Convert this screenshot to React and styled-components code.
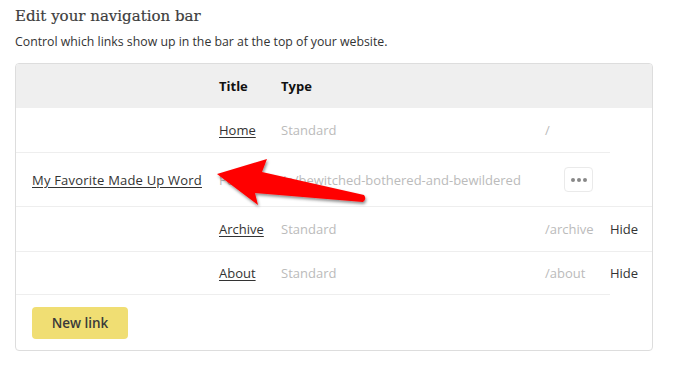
import React from 'react';
import styled, { createGlobalStyle } from 'styled-components';

const GlobalStyle = createGlobalStyle`
  body {
    margin: 0;
    background: #fff;
    font-family: "Open Sans", "Noto Sans", sans-serif;
    color: #333;
  }
`

const Page = styled.div`
  position: relative;
  width: 688px;
  height: 373px;
  padding: 0 15px;
  box-sizing: border-box;
  overflow: hidden;
`

const Heading = styled.h2`
  margin: 0;
  padding-top: 6px;
  font-family: "DejaVu Serif", "Liberation Serif", serif;
  font-weight: normal;
  font-size: 15px;
  line-height: 20px;
  color: #3d3d3d;
  -webkit-text-stroke: 0.2px #3d3d3d;
`

const Subtitle = styled.p`
  margin: 8px 0 0;
  font-size: 12.3px;
  line-height: 16px;
  color: #333;
`

const Card = styled.div`
  width: 638px;
  box-sizing: border-box;
  margin-top: 13px;
  border: 1px solid #ddd;
  border-radius: 4px;
  overflow: hidden;
`

const Row = styled.div`
  display: grid;
  grid-template-columns: 203px 62px 264px 65px 42px;
  background: ${p => (p.$head ? '#efefef' : '#fff')};
`

const Cell = styled.div`
  display: flex;
  align-items: center;
  height: ${p => p.$h || 44}px;
  padding-left: ${p => p.$pad || 0}px;
  border-bottom: 1px solid ${p => (p.$bare ? 'transparent' : '#eee')};
  font-size: 13px;
  white-space: nowrap;
  color: ${p => (p.$muted ? '#bbb' : '#333')};
  font-weight: ${p => (p.$bold ? 700 : 400)};
  ${p => p.$bold && 'color: #111;'}
  ${p => p.$head && 'border-bottom: none;'}
`

const NavLink = styled.a`
  color: #333;
  text-decoration: underline;
  text-underline-offset: 2px;
  letter-spacing: ${p => p.$wide ? '0.2px' : '0'};
`

const DotsButton = styled.button`
  display: flex;
  align-items: center;
  justify-content: center;
  gap: 2px;
  margin-left: 19px;
  width: 29px;
  height: 25px;
  padding: 0;
  border: 1px solid #eaeaea;
  border-radius: 4px;
  background: #fff;
`

const Dot = styled.span`
  width: 4px;
  height: 4px;
  border-radius: 50%;
  background: #888;
`

const Footer = styled.div`
  padding: 12px 16px 11px;
`

const NewLink = styled.button`
  width: 96px;
  height: 32px;
  border: none;
  border-radius: 4px;
  background: #f0de73;
  color: #3a3a3a;
  font-family: "Open Sans", "Noto Sans", sans-serif;
  font-size: 13.5px;
  font-weight: 600;
`

const Arrow = styled.svg`
  position: absolute;
  left: 0;
  top: 0;
  pointer-events: none;
`

const links = [
  { title: 'Home', path: '/' },
  { title: 'Archive', path: '/archive', hide: true },
  { title: 'About', path: '/about', hide: true, last: true },
]

function LinkRow({ link }) {
  const h = link.last ? 42 : 44
  return (
    <Row>
      <Cell $h={h} />
      <Cell $h={h}><NavLink>{link.title}</NavLink></Cell>
      <Cell $h={h} $muted>Standard</Cell>
      <Cell $h={h} $muted>{link.path}</Cell>
      {link.hide && <Cell $h={h} $bare={link.last}>Hide</Cell>}
    </Row>
  )
}

export default function App() {
  return (
    <Page>
      <GlobalStyle />
      <Heading>Edit your navigation bar</Heading>
      <Subtitle>Control which links show up in the bar at the top of your website.</Subtitle>
      <Card>
        <Row $head>
          <Cell $head />
          <Cell $head $bold>Title</Cell>
          <Cell $head $bold>Type</Cell>
          <Cell $head />
          <Cell $head />
        </Row>
        <LinkRow link={links[0]} />
        <Row>
          <Cell $h={53} $pad={16}><NavLink $wide>My Favorite Made Up Word</NavLink></Cell>
          <Cell $h={53} $muted>Post</Cell>
          <Cell $h={53} $muted>/p/bewitched-bothered-and-bewildered</Cell>
          <Cell $h={53}>
            <DotsButton><Dot /><Dot /><Dot /></DotsButton>
          </Cell>
          <Cell $h={53} />
        </Row>
        <LinkRow link={links[1]} />
        <LinkRow link={links[2]} />
        <Footer>
          <NewLink>New link</NewLink>
        </Footer>
      </Card>
      <Arrow width="688" height="373" viewBox="0 0 688 373">
        <defs>
          <filter id="shadow" x="-20%" y="-20%" width="140%" height="160%">
            <feDropShadow dx="1" dy="2" stdDeviation="1.5" floodColor="#000" floodOpacity="0.45" />
          </filter>
        </defs>
        <path
          d="M217 174 L267 159 L262 172 L364 195 Q367 199 363 202 L255 193 L258 205 Z"
          fill="#f00"
          filter="url(#shadow)"
        />
      </Arrow>
    </Page>
  )
}
